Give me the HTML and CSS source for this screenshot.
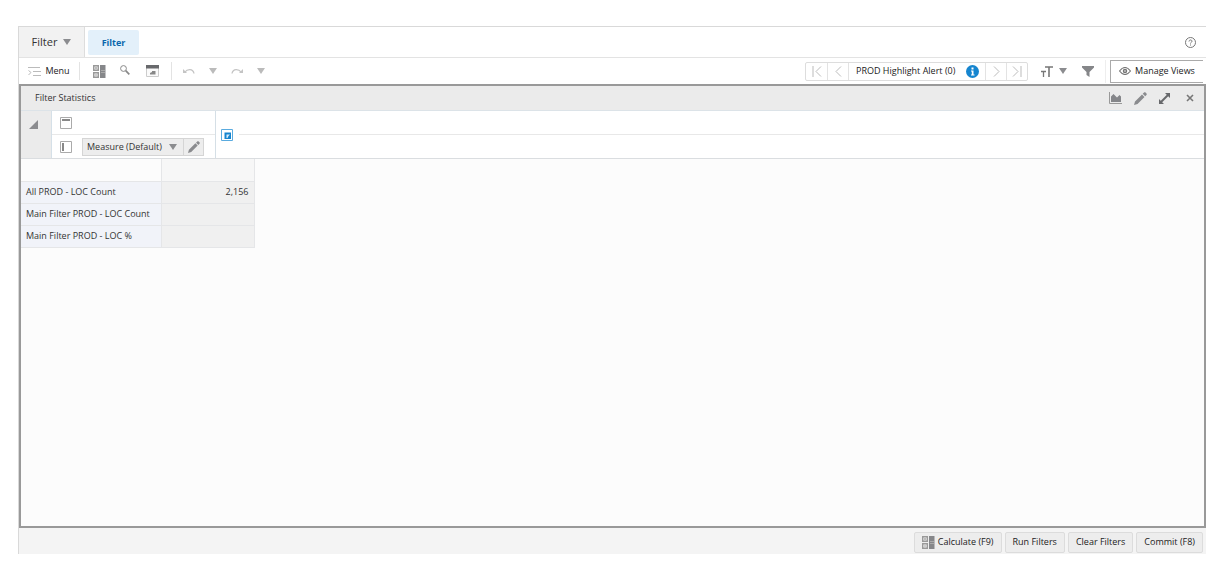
FILE: index.html
```html
<!DOCTYPE html>
<html lang="en">
<head>
    <meta charset="UTF-8">
    <meta name="viewport" content="width=device-width, initial-scale=1.0">
    <title>Filter</title>
    <link rel="stylesheet" href="styles.css">
</head>
<body>
    <svg class="sprite" aria-hidden="true">
        <symbol id="calc" viewBox="0 0 13 13">
            <path d="M.7.7h4.600v4.600H.7zM.7 7.700h4.600v4.600H.7z" fill="#eee" stroke="#999" stroke-width="1.400"/>
            <path d="M2 3h2M3 2v2M2 10h2" stroke="#aaa"/>
            <path d="M7 0h5.500v13H7z" fill="#86878a"/>
            <path d="M8 5.500h4M8 7.500h4" stroke="#aaa"/>
        </symbol>
        <symbol id="pencil" viewBox="0 0 13 13">
            <path d="M0 13l1-3.500 7-7 2.500 2.500-7 7zM8.700 1.800L10.300.3h1L12.700 1.700v1l-1.500 1.500z" fill="#8a8b8e"/>
        </symbol>
        <symbol id="down" viewBox="0 0 8 6">
            <path d="M0 0h8L4 6z" fill="currentColor"/>
        </symbol>
        <symbol id="undo" viewBox="0 0 12 7">
            <path d="M0 1v4h4z" fill="currentColor"/>
            <path d="M2 4C4 1 10 0 11 5.500" fill="none" stroke="currentColor" stroke-width="1.300"/>
        </symbol>
    </svg>

    <div class="app">
        <header class="tabs">
            <button class="task">Filter <svg class="down"><use href="#down"/></svg></button>
            <button class="tab">Filter</button>
            <button class="icon help" aria-label="Help">
                <svg width="11" height="11" viewBox="0 0 11 11" fill="none" stroke="#777">
                    <circle cx="5.500" cy="5.500" r="5"/>
                    <path d="M4 4.500C4 2.500 7 2.500 7 4.300 7 5.300 5.500 5.300 5.500 6.500M5.500 7.500v1"/>
                </svg>
            </button>
        </header>

        <div class="toolbar">
            <button class="menu">
                <svg width="13" height="11" viewBox="0 0 13 11" fill="none" stroke="#bbb">
                    <path d="M0 1.500h12M5 5.500h8M5 9.500h8M.5 4.500l2.500 2-2.500 2.500"/>
                </svg>
                Menu
            </button>
            <div class="tools">
                <button class="icon" aria-label="Calculate"><svg width="13" height="13"><use href="#calc"/></svg></button>
                <button class="icon find" aria-label="Find">
                    <svg width="10" height="10" viewBox="0 0 10 10" fill="none" stroke="#888">
                        <circle cx="3.500" cy="3.500" r="2.900"/>
                        <path d="M5.700 5.700L9.300 9.300" stroke-width="1.700"/>
                    </svg>
                </button>
                <button class="icon" aria-label="Format">
                    <svg width="13" height="12" viewBox="0 0 13 12">
                        <path d="M.5.5h12v11H.5z" fill="#fafafa" stroke="#ccc"/>
                        <path d="M0 0h13v3.500H0z" fill="#68696c"/>
                        <path d="M4 9.500V8l2-1V6h3.500v3.500z" fill="#888"/>
                    </svg>
                </button>
            </div>
            <div class="history">
                <button class="icon" aria-label="Undo"><svg width="12" height="7"><use href="#undo"/></svg></button>
                <button class="icon" aria-label="Undo list"><svg class="down"><use href="#down"/></svg></button>
                <button class="icon" aria-label="Redo"><svg class="flip" width="12" height="7"><use href="#undo"/></svg></button>
                <button class="icon" aria-label="Redo list"><svg class="down"><use href="#down"/></svg></button>
            </div>

            <div class="alerts">
                <button aria-label="First"><svg width="10" height="11" viewBox="0 0 10 11"><path d="M1 0v11M9 .5l-5 5 5 5"/></svg></button>
                <button aria-label="Previous"><svg width="7" height="11" viewBox="0 0 7 11"><path d="M6 .5l-5 5 5 5"/></svg></button>
                <div class="alert-name">
                    <span>PROD Highlight Alert (0)</span>
                    <svg width="13" height="13" viewBox="0 0 13 13">
                        <circle cx="6.500" cy="6.500" r="6.500" fill="#1585cf"/>
                        <path d="M5.500 2.500h2v2h-2zM5 5.500h2.500V9.500h1v1H5v-1h.800v-3H5z" fill="#fff"/>
                    </svg>
                </div>
                <button aria-label="Next"><svg width="7" height="11" viewBox="0 0 7 11"><path d="M1 .5l5 5-5 5"/></svg></button>
                <button aria-label="Last"><svg width="10" height="11" viewBox="0 0 10 11"><path d="M1 .5l5 5-5 5M9 0v11"/></svg></button>
            </div>
            <button class="icon text-size" aria-label="Text size">
                <svg width="12" height="11" viewBox="0 0 12 11" fill="none" stroke="#777">
                    <path d="M4 1h8M8 1v10" stroke-width="1.600"/>
                    <path d="M0 5.500h5M2.500 5.500V11" stroke-width="1.300"/>
                </svg>
                <svg class="down"><use href="#down"/></svg>
            </button>
            <button class="icon funnel" aria-label="Filter">
                <svg width="12" height="11" viewBox="0 0 12 11"><path d="M0 0h12v1.500L7.500 6v5l-3-2V6L0 1.500z" fill="#858689"/></svg>
            </button>
            <div class="views">
                <button class="manage">
                    <svg width="12" height="8" viewBox="0 0 12 8" fill="none" stroke="#777">
                        <path d="M.5 4Q6-3 11.500 4 6 11 .5 4z" stroke-width="1.200"/>
                        <circle cx="6" cy="4" r="1.500" stroke-width="1.500"/>
                    </svg>
                    Manage Views
                </button>
            </div>
        </div>

        <main class="panel">
            <div class="panel-head">
                <span>Filter Statistics</span>
                <div class="panel-icons">
                    <button class="icon" aria-label="Chart">
                        <svg width="13" height="12" viewBox="0 0 13 12">
                            <path d="M.5 0v11.500H13" fill="none" stroke="#999"/>
                            <path d="M2 10V4.500L4.500 2 8 5.500 10.500 3 12 4.500V10z" fill="#85868a"/>
                        </svg>
                    </button>
                    <button class="icon" aria-label="Edit"><svg width="13" height="13"><use href="#pencil"/></svg></button>
                    <button class="icon" aria-label="Maximize">
                        <svg width="11" height="11" viewBox="0 0 11 11">
                            <path d="M2 9l7-7" stroke="#68696c" stroke-width="2"/>
                            <path d="M6 0h5v5zM0 6v5h5z" fill="#68696c"/>
                        </svg>
                    </button>
                    <button class="icon" aria-label="Close">
                        <svg width="8" height="8" viewBox="0 0 8 8"><path d="M1 1l6 6M7 1L1 7" stroke="#777" stroke-width="1.600"/></svg>
                    </button>
                </div>
            </div>

            <div class="axes">
                <button class="corner" aria-label="Collapse">
                    <svg width="9" height="9" viewBox="0 0 9 9"><path d="M9 0v9H0z" fill="#8b8c8f"/></svg>
                </button>
                <div class="tiles">
                    <div class="tile">
                        <svg width="12" height="12" viewBox="0 0 12 12" fill="none">
                            <path d="M.5.5h11v11H.5z" stroke="#aaa"/>
                            <path d="M2 3h8" stroke="#888" stroke-width="2"/>
                        </svg>
                    </div>
                    <div class="tile">
                        <svg width="12" height="12" viewBox="0 0 12 12" fill="none">
                            <path d="M.5.5h11v11H.5z" stroke="#aaa"/>
                            <path d="M3 2v8" stroke="#888" stroke-width="2"/>
                        </svg>
                        <div class="measure">
                            <button class="measure-name">Measure (Default) <svg class="down"><use href="#down"/></svg></button>
                            <button class="measure-edit" aria-label="Edit measure"><svg width="12" height="12"><use href="#pencil"/></svg></button>
                        </div>
                    </div>
                </div>
                <div class="page-axis">
                    <button class="icon" aria-label="Page axis">
                        <svg width="12" height="12" viewBox="0 0 12 12">
                            <path d="M.5.5h11v11H.5z" fill="#fff" stroke="#5aabdf"/>
                            <path d="M3.500 3.500H10V10H3.500z" fill="#1585cf"/>
                            <path d="M5.500 9V5.500H9L7.500 7 6.500 9z" fill="#d9edfa"/>
                        </svg>
                    </button>
                    <div class="page-line"></div>
                </div>
            </div>

            <table class="grid">
                <thead>
                    <tr><td></td><th></th></tr>
                </thead>
                <tbody>
                    <tr><th scope="row">All PROD - LOC Count</th><td>2,156</td></tr>
                    <tr><th scope="row">Main Filter PROD - LOC Count</th><td></td></tr>
                    <tr><th scope="row">Main Filter PROD - LOC %</th><td></td></tr>
                </tbody>
            </table>
        </main>

        <footer class="actions">
            <button><svg width="13" height="13"><use href="#calc"/></svg> Calculate (F9)</button>
            <button>Run Filters</button>
            <button>Clear Filters</button>
            <button>Commit (F8)</button>
        </footer>
    </div>
</body>
</html>
```
FILE: styles.css
```css
* {
    box-sizing: border-box;
}

body {
    margin: 0;
    padding: 26px 20px 15px 18px;
    height: 100vh;
    background: #fff;
    color: #333;
    font-family: "Open Sans", "Noto Sans", sans-serif;
    font-size: 9px;
    line-height: 12px;
}

button {
    display: flex;
    align-items: center;
    justify-content: center;
    margin: 0;
    padding: 0;
    border: none;
    background: none;
    color: inherit;
    font: inherit;
    white-space: nowrap;
    cursor: pointer;
}

svg {
    display: block;
    flex: none;
}

.sprite {
    position: absolute;
    width: 0;
    height: 0;
}

.down {
    width: 8px;
    height: 6px;
    color: #8b8c8f;
}

.flip {
    transform: scaleX(-1);
}

.app {
    display: flex;
    flex-direction: column;
    height: 100%;
    border-top: 1px solid #d9d9d9;
    border-left: 1px solid #d9d9d9;
}

/* task tabs */
.tabs {
    display: flex;
    align-items: center;
    height: 31px;
    border-bottom: 1px solid #e3e3e3;
}

.task {
    gap: 6px;
    width: 66px;
    height: 30px;
    border-right: 1px solid #ddd;
    background: #f2f2f2;
    font-size: 11px;
}

.tab {
    width: 51px;
    height: 25px;
    padding-top: 2px;
    margin-left: 3px;
    border-radius: 2px;
    background: #e3f0fa;
    color: #0a67ad;
    font-weight: bold;
}

.help {
    margin-left: auto;
    margin-right: 10px;
}

/* toolbar */
.toolbar {
    display: flex;
    align-items: center;
    height: 26px;
    color: #222;
}

.menu {
    gap: 4px;
    width: 61px;
    height: 18px;
    border-right: 1px solid #e3e3e3;
}

.tools {
    display: flex;
    align-items: center;
    justify-content: space-between;
    width: 92px;
    height: 18px;
    padding: 0 12px 0 13px;
    border-right: 1px solid #e3e3e3;
}

.find {
    padding: 0 2px 2px 0;
}

.history {
    display: flex;
    align-items: center;
    gap: 14px;
    margin-left: 11px;
    color: #c4c4c4;
}

.history .down {
    color: #bbb;
}

.alerts {
    display: flex;
    height: 19px;
    margin-left: auto;
    border: 1px solid #ddd;
    border-radius: 2px;
}

.alerts button {
    width: 21px;
    fill: none;
    stroke: #bbb;
}

.alerts button + button,
.alert-name,
.alert-name + button {
    border-left: 1px solid #e3e3e3;
}

.alert-name {
    display: flex;
    align-items: center;
    justify-content: space-between;
    width: 137px;
    padding: 0 6px 0 7px;
}

.text-size {
    gap: 6px;
    margin-left: 13px;
}

.funnel {
    margin-left: 15px;
}

.views {
    margin-left: 11px;
    padding-left: 4px;
    padding-right: 3px;
    border-left: 1px solid #eee;
}

.manage {
    gap: 4px;
    width: 93px;
    height: 23px;
    border: 1px solid #aaa;
    border-right: none;
}

/* statistics panel */
.panel {
    flex: 1;
    border: 2px solid #999;
    background: #fcfcfc;
}

.panel-head {
    display: flex;
    align-items: center;
    justify-content: space-between;
    height: 25px;
    padding: 0 10px 0 14px;
    border-bottom: 1px solid #dce3e8;
    background: #ebebeb;
}

.panel-icons {
    display: flex;
    align-items: center;
    gap: 12px;
}

.panel-icons button:last-child {
    margin-left: 4px;
}

.axes {
    display: flex;
    height: 48px;
    border-bottom: 1px solid #dadde0;
    background: #fff;
}

.corner {
    width: 31px;
    align-items: flex-start;
    padding: 9px 6px 0 0;
    border-right: 1px solid #d5e0e8;
    background: #ebebeb;
}

.tiles {
    width: 164px;
    border-right: 1px solid #d5dfe6;
}

.tile {
    display: flex;
    align-items: center;
    gap: 10px;
    height: 24px;
    padding-left: 8px;
}

.tile:first-child {
    border-bottom: 1px solid #e8e8e8;
}

.measure {
    display: flex;
    height: 18px;
    border: 1px solid #d5d5d5;
    background: #ededed;
}

.measure-name {
    justify-content: space-between;
    width: 100px;
    padding: 0 6px 0 4px;
}

.measure-edit {
    width: 20px;
    border-left: 1px solid #d5d5d5;
}

.page-axis {
    display: flex;
    flex: 1;
    align-items: center;
    gap: 6px;
    padding-left: 5px;
}

.page-line {
    flex: 1;
    height: 1px;
    background: #e8e8e8;
}

.grid {
    border-collapse: collapse;
    table-layout: fixed;
    width: 233px;
}

.grid td,
.grid th {
    width: 93px;
    height: 22px;
    padding: 0 5px;
    border: 1px solid #e5e6e8;
    border-top: none;
    font-weight: normal;
    white-space: nowrap;
}

.grid tr > :first-child {
    width: 140px;
    border-left: none;
    text-align: left;
}

.grid thead th {
    background: #f7f7f7;
}

.grid tbody th {
    background: #f1f3f9;
}

.grid tbody td {
    background: #f0f0f0;
    text-align: right;
}

/* footer actions */
.actions {
    display: flex;
    align-items: center;
    justify-content: flex-end;
    gap: 3px;
    height: 26px;
    padding: 2px 3px 0 0;
    background: #f4f4f4;
}

.actions button {
    gap: 3px;
    height: 21px;
    padding: 0 7px;
    border: 1px solid #dcdcdc;
    border-radius: 2px;
    background: #ededed;
    color: #222;
}
```
